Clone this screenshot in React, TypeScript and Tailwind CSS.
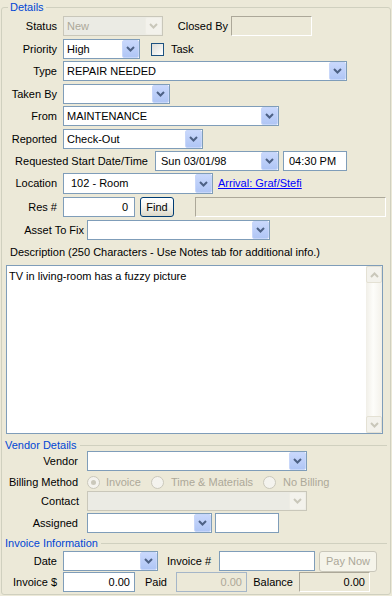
import type { ReactNode } from 'react';
import clsx from 'clsx';

// Windows XP style "work order" form: Details / Vendor Details / Invoice Information

function Chevron({ color, up = false }: { color: string; up?: boolean }) {
  return (
    <svg width="9" height="6" viewBox="0 0 9 6" className={up ? 'rotate-180' : ''}>
      <path d="M1 1l3.5 3.5L8 1" fill="none" stroke={color} strokeWidth="2" />
    </svg>
  );
}

function Label({ children, className }: { children: ReactNode; className?: string }) {
  return <span className={clsx('shrink-0 text-right whitespace-nowrap', className ?? 'mr-[6px] w-[55px]')}>{children}</span>;
}

function Combo({
  value,
  disabled,
  className,
  textClass,
}: {
  value?: string;
  disabled?: boolean;
  className?: string;
  textClass?: string;
}) {
  return (
    <div
      className={clsx(
        'flex h-[20px] shrink-0 border',
        disabled ? 'border-[#c9c7ba] bg-[#ebebe4] text-[#aca899]' : 'border-[#7f9db9] bg-white',
        className,
      )}
    >
      <span className={clsx('flex-1 truncate leading-[18px] whitespace-nowrap', textClass ?? 'pl-[3px]')}>{value}</span>
      <span
        className={clsx(
          'flex w-[17px] items-center justify-center rounded-[2px] border',
          disabled
            ? 'border-[#eeede5] bg-[#f3f2ec]'
            : 'border-[#c8d7fa] bg-gradient-to-b from-[#c9d8fc] to-[#b0c6f5]',
        )}
      >
        <Chevron color={disabled ? '#c9c7ba' : '#4d6185'} />
      </span>
    </div>
  );
}

function TextBox({ value, className }: { value?: string; className?: string }) {
  return (
    <div className={clsx('h-[20px] shrink-0 border border-[#7f9db9] bg-white leading-[18px] whitespace-nowrap', className)}>
      {value}
    </div>
  );
}

function Sunken({ value, className }: { value?: string; className?: string }) {
  return (
    <div
      className={clsx(
        'h-[20px] shrink-0 border border-t-[#aca899] border-r-white border-b-white border-l-[#aca899] bg-[#ece9d8] leading-[18px]',
        className,
      )}
    >
      {value}
    </div>
  );
}

function Radio({ checked }: { checked?: boolean }) {
  return (
    <span className="flex h-[13px] w-[13px] shrink-0 items-center justify-center rounded-full border border-[#cac8bb] bg-[#f4f3ee]">
      {checked && <span className="h-[5px] w-[5px] rounded-full bg-[#cac8bb]" />}
    </span>
  );
}

function SectionHeader({ title }: { title: string }) {
  return (
    <div className="flex h-[11px] items-center pl-[3px] pr-[3px]">
      <span className="leading-[11px] whitespace-nowrap text-[#0046d5]">{title}</span>
      <span className="ml-[3px] h-px flex-1 bg-[#d0d0bf]" />
    </div>
  );
}

export default function App() {
  return (
    <div className="h-[596px] w-[392px] overflow-hidden bg-[#ece9d8] font-['Liberation_Sans',Arial,sans-serif] text-[11px] text-black">
      <fieldset className="ml-[1px] h-[595px] w-[390px] rounded-[3px] border border-[#d0d0bf]">
        <legend className="ml-[6px] px-[2px] leading-[14px] text-[#0046d5]">Details</legend>

        <div className="mt-[2px] flex h-[20px] items-center">
          <Label>Status</Label>
          <Combo className="w-[100px]" value="New" disabled />
          <Label className="w-[68px] pr-[3px]">Closed By</Label>
          <Sunken className="w-[81px]" />
        </div>

        <div className="mt-[3px] flex h-[20px] items-center">
          <Label>Priority</Label>
          <Combo className="w-[77px]" value="High" />
          <span className="ml-[11px] h-[13px] w-[13px] shrink-0 border border-[#1c5180] bg-gradient-to-br from-[#dcdcd7] to-white" />
          <span className="ml-[7px]">Task</span>
        </div>

        <div className="mt-[2px] flex h-[20px] items-center">
          <Label>Type</Label>
          <Combo className="w-[284px]" value="REPAIR NEEDED" />
        </div>

        <div className="mt-[3px] flex h-[20px] items-center">
          <Label>Taken By</Label>
          <Combo className="w-[107px]" />
        </div>

        <div className="mt-[2px] flex h-[20px] items-center">
          <Label>From</Label>
          <Combo className="w-[216px]" value="MAINTENANCE" />
        </div>

        <div className="mt-[3px] flex h-[20px] items-center">
          <Label>Reported</Label>
          <Combo className="w-[140px]" value="Check-Out" />
        </div>

        <div className="mt-[2px] flex h-[20px] items-center">
          <Label className="w-[153px] pr-[7px]">Requested Start Date/Time</Label>
          <Combo className="w-[124px]" value="Sun 03/01/98" textClass="pl-[5px]" />
          <TextBox className="ml-[4px] w-[64px] pl-[5px]" value="04:30 PM" />
        </div>

        <div className="mt-[2px] flex h-[21px] items-center">
          <Label>Location</Label>
          <Combo className="h-[21px] w-[150px]" value="102 - Room" textClass="pl-[7px]" />
          <a href="#" className="ml-[5px] whitespace-nowrap text-[#0000ff] underline">
            Arrival: Graf/Stefi
          </a>
        </div>

        <div className="mt-[3px] flex h-[20px] items-center">
          <Label>Res #</Label>
          <TextBox className="w-[72px] pr-[6px] text-right" value="0" />
          <button
            type="button"
            className="ml-[5px] h-[20px] w-[34px] shrink-0 rounded-[3px] border border-[#003c74] bg-gradient-to-b from-white via-[#f4f3ee] to-[#dcd8c8] leading-[18px]"
          >
            Find
          </button>
          <Sunken className="ml-[21px] w-[191px]" />
        </div>

        <div className="mt-[3px] flex h-[20px] items-center">
          <Label className="w-[85px] pr-[3px]">Asset To Fix</Label>
          <Combo className="w-[183px]" />
        </div>

        <div className="mt-[6px] h-[13px] pl-[8px] leading-[13px] whitespace-nowrap">
          Description (250 Characters - Use Notes tab for additional info.)
        </div>

        <div className="mt-[6px] ml-[4px] flex h-[169px] w-[377px] border border-[#7f9db9] bg-white">
          <div className="flex-1 pt-[3px] pl-[2px] leading-[14px]">TV in living-room has a fuzzy picture</div>
          <div className="flex w-[16px] flex-col bg-[linear-gradient(to_right,#f1efe8,#fdfdfa_45%,#f3f1ea)]">
            <span className="flex h-[17px] items-center justify-center rounded-[2px] border border-[#e4e1d4] bg-[#f3f2ec]">
              <Chevron color="#c9c7ba" up />
            </span>
            <span className="flex-1" />
            <span className="flex h-[17px] items-center justify-center rounded-[2px] border border-[#e4e1d4] bg-[#f3f2ec]">
              <Chevron color="#c9c7ba" />
            </span>
          </div>
        </div>

        <div className="mt-[6px]">
          <SectionHeader title="Vendor Details" />
        </div>

        <div className="flex h-[20px] items-center">
          <Label className="w-[85px] pr-[9px]">Vendor</Label>
          <Combo className="w-[220px]" />
        </div>

        <div className="mt-[3px] flex h-[16px] items-center">
          <Label className="w-[85px] pr-[9px]">Billing Method</Label>
          <div className="flex w-[64px] items-center text-[#aca899]">
            <Radio checked />
            <span className="ml-[6px]">Invoice</span>
          </div>
          <div className="flex w-[112px] items-center text-[#aca899]">
            <Radio />
            <span className="ml-[7px] whitespace-nowrap">Time &amp; Materials</span>
          </div>
          <div className="flex items-center text-[#aca899]">
            <Radio />
            <span className="ml-[7px] whitespace-nowrap">No Billing</span>
          </div>
        </div>

        <div className="mt-[1px] flex h-[20px] items-center">
          <Label className="w-[85px] pr-[8px]">Contact</Label>
          <Combo className="w-[220px]" disabled />
        </div>

        <div className="mt-[2px] flex h-[20px] items-center">
          <Label className="w-[85px] pr-[9px]">Assigned</Label>
          <Combo className="w-[125px]" />
          <TextBox className="ml-[3px] w-[64px]" />
        </div>

        <div className="mt-[5px]">
          <SectionHeader title="Invoice Information" />
        </div>

        <div className="mt-[2px] flex h-[20px] items-center">
          <Label>Date</Label>
          <Combo className="w-[95px]" />
          <Label className="w-[61px] pr-[8px]">Invoice #</Label>
          <TextBox className="w-[96px]" />
          <button
            type="button"
            disabled
            className="ml-[4px] h-[21px] w-[58px] shrink-0 rounded-[3px] border border-[#c9c7ba] bg-[#f5f4ea] leading-[19px] text-[#aca899]"
          >
            Pay Now
          </button>
        </div>

        <div className="mt-[1px] flex h-[20px] items-center">
          <Label>Invoice $</Label>
          <TextBox className="w-[72px] pr-[4px] text-right" value="0.00" />
          <Label className="w-[41px] pr-[9px]">Paid</Label>
          <div className="h-[20px] w-[71px] shrink-0 border border-[#a5b6c8] bg-[#ece9d8] pr-[4px] text-right leading-[18px] text-[#aca899]">
            0.00
          </div>
          <Label className="w-[52px] pr-[6px]">Balance</Label>
          <Sunken className="w-[71px] pr-[4px] text-right" value="0.00" />
        </div>
      </fieldset>
    </div>
  );
}
